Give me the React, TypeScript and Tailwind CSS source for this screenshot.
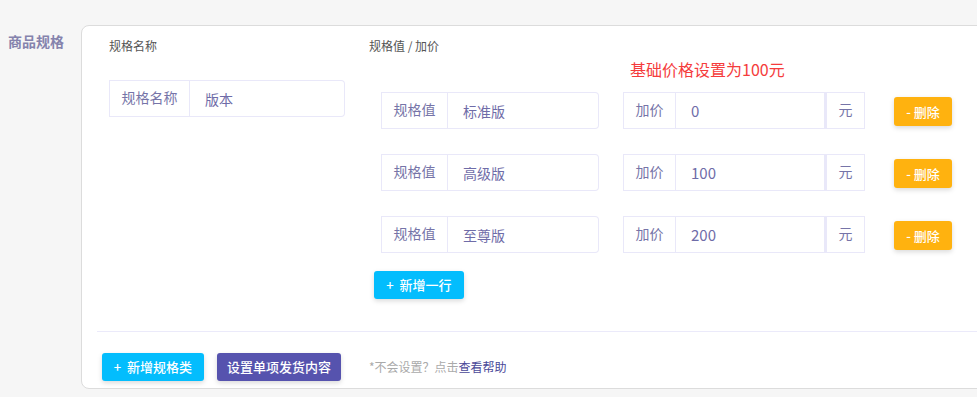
import React from "react";

const font = { fontFamily: '"Noto Sans CJK SC", "Noto Sans", sans-serif' };

function Row({ name, price }: { name: string; price: string }) {
  return (
    <div className="flex items-center pl-[12px]">
      <div className="flex h-[37px] w-[218px]">
        <div className="flex w-[67px] items-center justify-center border border-[#e9e8f9] text-[14px] text-[#7674a8] pb-[2px]">规格值</div>
        <div className="flex flex-1 items-center rounded-r-[4px] border border-l-0 border-[#e9e8f9] pl-[15px] pt-[2px] text-[14px] text-[#6f6ca8]">{name}</div>
      </div>
      <div className="ml-[24px] flex h-[37px] w-[242px]">
        <div className="flex w-[53px] items-center justify-center border border-[#e9e8f9] text-[14px] text-[#7674a8] pb-[2px]">加价</div>
        <div className="flex w-[149px] items-center border border-l-0 border-[#e9e8f9] pl-[15px] pt-[1px] text-[15px] text-[#6f6ca8]">{price}</div>
        <div className="flex w-[40px] items-center justify-center border border-l-[2px] border-[#e9e8f9] text-[14px] text-[#7674a8] pb-[2px]">元</div>
      </div>
      <button className="ml-[29px] mt-[2px] flex h-[29px] w-[58px] items-center justify-center rounded-[3px] bg-[#ffb20f] text-[13px] font-medium text-white shadow-[0_2px_5px_rgba(0,0,0,0.15)]">- 删除</button>
    </div>
  );
}

export default function App() {
  return (
    <div className="h-[397px] w-[977px] overflow-hidden bg-[#f6f6f6]" style={font}>
      <div className="flex pt-[25px]">
        <div className="w-[81px] shrink-0 pl-[8px] pt-[6px] text-[14px] font-bold text-[#8583ad]">商品规格</div>
        <div className="h-[364px] w-[920px] shrink-0 rounded-[8px] border border-[#dcdcdc] bg-white pl-[15px] pt-[12px]">
          <div className="flex h-[293px]">
            <div className="w-[272px] shrink-0 pl-[12px]">
              <div className="h-[16px] text-[12px] leading-[16px] text-[#555]">规格名称</div>
              <div className="mt-[26px] flex h-[37px] w-[236px]">
                <div className="flex w-[81px] items-center justify-center border border-[#e9e8f9] pb-[3px] text-[14px] text-[#7674a8]">规格名称</div>
                <div className="flex flex-1 items-center rounded-r-[4px] border border-l-0 border-[#e9e8f9] pl-[15px] pt-[2px] text-[14px] text-[#6f6ca8]">版本</div>
              </div>
            </div>
            <div className="flex-1">
              <div className="h-[16px] text-[12px] leading-[16px] text-[#555]">规格值 / 加价</div>
              <div className="ml-[261px] mt-[5px] h-[20px] text-[16px] leading-[20px] text-[#f53c3c]">基础价格设置为100元</div>
              <div className="mt-[13px] flex flex-col gap-[25px]">
                <Row name="标准版" price="0" />
                <Row name="高级版" price="100" />
                <Row name="至尊版" price="200" />
              </div>
              <button className="ml-[5px] mt-[18px] flex h-[28px] w-[90px] items-center justify-center rounded-[3px] bg-[#03bdfd] text-[13px] font-medium text-white shadow-[0_2px_5px_rgba(0,0,0,0.15)]">+&nbsp; 新增一行</button>
            </div>
          </div>
          <div className="h-px bg-[#ebeafa]" />
          <div className="mt-[21px] flex items-center pl-[5px]">
            <button className="flex h-[28px] w-[102px] items-center justify-center rounded-[3px] bg-[#03bdfd] text-[13px] font-medium text-white shadow-[0_2px_5px_rgba(0,0,0,0.15)]">+&nbsp; 新增规格类</button>
            <button className="ml-[13px] flex h-[28px] w-[124px] items-center justify-center rounded-[3px] bg-[#5653ae] text-[13px] font-medium text-white shadow-[0_2px_5px_rgba(0,0,0,0.15)]">设置单项发货内容</button>
            <div className="ml-[28px] text-[12px] text-[#aaaaaa]">*不会设置？点击<span className="text-[#4a4898]">查看帮助</span></div>
          </div>
        </div>
      </div>
    </div>
  );
}
